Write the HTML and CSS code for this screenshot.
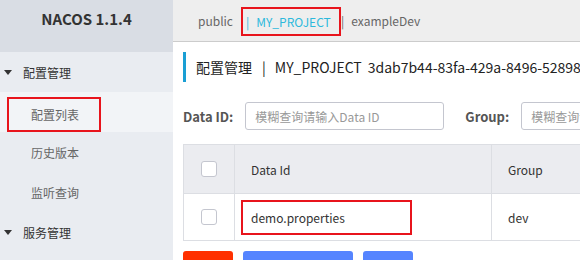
FILE: index.html
```html
<!DOCTYPE html>
<html>
<head>
<meta charset="utf-8">
<link rel="stylesheet" href="styles.css">
</head>
<body>
<div class="app">
  <aside class="sidebar">
    <div class="brand">NACOS 1.1.4</div>
    <div class="menu-group"><span class="caret"></span>配置管理</div>
    <div class="menu-item active"><span class="hl-box">配置列表</span></div>
    <div class="menu-item">历史版本</div>
    <div class="menu-item">监听查询</div>
    <div class="menu-group"><span class="caret"></span>服务管理</div>
  </aside>
  <main class="main">
    <div class="tabs">
      <span class="tab first">public</span>
      <span class="tab-box"><span class="tab active"><span class="sep">|</span>MY_PROJECT</span></span>
      <span class="tab"><span class="sep">|</span>exampleDev</span>
    </div>
    <div class="content">
      <div class="title"><span>配置管理</span><span class="tsep">|</span><span>MY_PROJECT</span><span class="tid">3dab7b44-83fa-429a-8496-528986</span></div>
      <div class="search">
        <label class="lbl">Data ID:</label>
        <div class="input wide">模糊查询请输入Data ID</div>
        <label class="lbl">Group:</label>
        <div class="input">模糊查询请</div>
      </div>
      <div class="table">
        <div class="row head">
          <div class="cell chk"><span class="checkbox"></span></div>
          <div class="cell did">Data Id</div>
          <div class="cell grp">Group</div>
        </div>
        <div class="row body">
          <div class="cell chk"><span class="checkbox"></span></div>
          <div class="cell did"><span class="hl-cell">demo.properties</span></div>
          <div class="cell grp">dev</div>
        </div>
      </div>
      <div class="buttons">
        <span class="btn red"></span>
        <span class="btn blue wide"></span>
        <span class="btn blue"></span>
      </div>
    </div>
  </main>
</div>
</body>
</html>
```
FILE: styles.css
```css
html, body { margin: 0; padding: 0; }
body {
  width: 580px; height: 260px; overflow: hidden;
  font-family: "Noto Sans CJK SC", sans-serif;
  font-size: 12px; color: #333; background: #fff;
}
.app { display: flex; height: 260px; }
.sidebar { width: 173px; flex: none; background: #e9ecf1; }
.brand {
  height: 52px; background: #d9dde4; font-weight: bold; color: #333;
  text-align: center; line-height: 37px; font-size: 15px;
}
.menu-group {
  height: 40px; display: flex; align-items: center; color: #333;
  padding-left: 4px;
}
.caret {
  width: 0; height: 0; border-left: 4px solid transparent; border-right: 4px solid transparent;
  border-top: 5px solid #333; margin-right: 11px;
}
.menu-item { height: 40px; display: flex; align-items: center; padding-left: 31px; color: #666; }
.menu-item.active { background: #f2f4f7; padding-left: 7px; }
.hl-box {
  box-sizing: border-box; width: 94px; height: 35px; border: 2px solid #e8141c;
  display: flex; align-items: center; padding-left: 22px; margin-top: 4px;
}
.main { flex: 1; min-width: 0; overflow: hidden; }
.tabs {
  height: 41px; background: #eee; border-bottom: 1px solid #ccc;
  display: flex; align-items: center; padding-left: 25px; white-space: nowrap; color: #666;
}
.tab.first { width: 43px; }
.sep { margin-right: 7px; }
.tab-box {
  box-sizing: border-box; height: 29px; width: 100px; border: 2px solid #e8141c;
  display: flex; align-items: center; padding-left: 3px; margin-top: 1px; margin-right: 0;
}
.tab.active { color: #2cb9dc; }
.content { padding-left: 10px; }
.title {
  margin-top: 10px; height: 30px; border-left: 3px solid #1a9fd4; padding-left: 10px;
  display: flex; align-items: center; font-size: 14px; color: #222; white-space: nowrap;
}
.tsep { margin: 0 9px 0 10px; }
.tid { margin-left: 6px; }
.search { margin-top: 20px; display: flex; align-items: center; height: 28px; white-space: nowrap; }
.lbl { font-weight: bold; color: #555; margin-right: 12px; font-size: 13px; }
.input {
  box-sizing: border-box; height: 28px; border: 1px solid #c4c6cf; border-radius: 3px;
  display: flex; align-items: center; padding-left: 9px; color: #999; width: 200px; flex: none; overflow: hidden;
}
.input.wide { width: 199px; margin-right: 21px; }
.lbl + .input { }
.table { margin-top: 14px; border: 1px solid #dcdee3; border-right: none; width: 420px; }
.row { display: flex; }
.row.head { height: 48px; background: #ebecf0; border-bottom: 1px solid #dcdee3; }
.row.body { height: 46px; background: #fff; }
.cell { display: flex; align-items: center; box-sizing: border-box; flex: none; }
.cell.chk { width: 51px; justify-content: center; border-right: 1px solid #dcdee3; }
.cell.did { width: 257px; padding-left: 16px; border-right: 1px solid #dcdee3; }
.row.body .cell.did { padding-left: 6px; }
.cell.grp { padding-left: 16px; flex: 1; }
.checkbox {
  width: 14px; height: 14px; border: 1px solid #c4c6cf; border-radius: 3px; background: #fff;
}
.hl-cell {
  box-sizing: border-box; width: 171px; height: 35px; border: 2px solid #e8141c;
  display: flex; align-items: center; padding-left: 8px;
}
.buttons { margin-top: 10px; display: flex; gap: 10px; }
.btn { height: 28px; width: 50px; border-radius: 3px; }
.btn.red { background: #ff3000; }
.btn.blue { background: #5584ff; }
.btn.blue.wide { width: 110px; }
```
